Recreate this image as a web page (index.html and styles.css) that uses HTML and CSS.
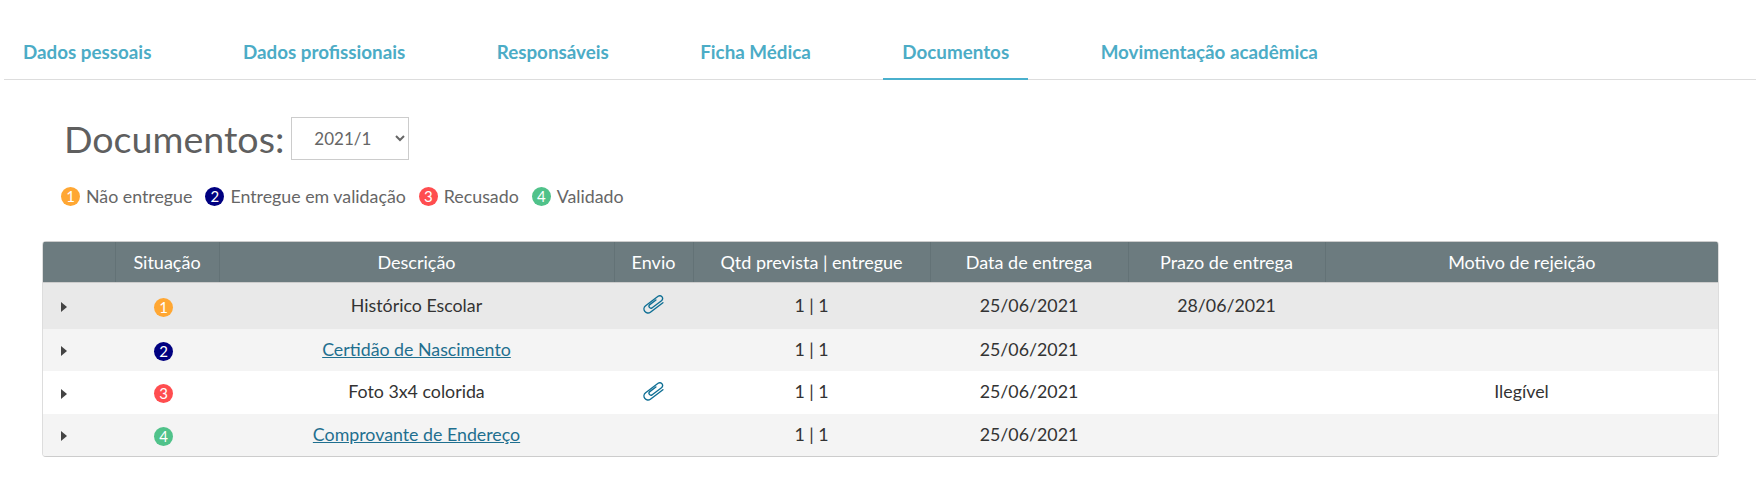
FILE: index.html
```html
<!DOCTYPE html>
<html lang="pt-BR">
<head>
	<meta charset="UTF-8">
	<title>Documentos</title>
	<link rel="stylesheet" href="styles.css">
</head>
<body>
	<ul class="tabs">
		<li><a href="#">Dados pessoais</a></li>
		<li><a href="#">Dados profissionais</a></li>
		<li><a href="#">Responsáveis</a></li>
		<li><a href="#">Ficha Médica</a></li>
		<li><a href="#" class="current">Documentos</a></li>
		<li><a href="#">Movimentação acadêmica</a></li>
	</ul>

	<div class="title">
		<h1>Documentos:</h1>
		<select class="period">
			<option>2021/1</option>
		</select>
	</div>

	<ul class="legend">
		<li><span class="num orange">1</span>Não entregue</li>
		<li><span class="num navy">2</span>Entregue em validação</li>
		<li><span class="num red">3</span>Recusado</li>
		<li><span class="num green">4</span>Validado</li>
	</ul>

	<svg width="0" height="0" class="defs">
		<symbol id="clip" viewBox="0 0 22 19">
			<path d="M19.9 7.7L7.4 17.2A4 4 0 0 1 2.6 10.8L15.1 1.3A2.8 2.8 0 0 1 18.5 5.8L8.9 13A2 2 0 0 1 6.5 9.9L12.9 5" fill="none" stroke="#0f6f94" stroke-width="1.4" stroke-linecap="round" stroke-linejoin="round"/>
		</symbol>
	</svg>

	<div class="docs">
		<table>
			<colgroup>
				<col class="c-arrow">
				<col class="c-status">
				<col class="c-desc">
				<col class="c-send">
				<col class="c-qty">
				<col class="c-date">
				<col class="c-due">
				<col>
			</colgroup>
			<thead>
				<tr>
					<th></th>
					<th>Situação</th>
					<th>Descrição</th>
					<th>Envio</th>
					<th>Qtd prevista | entregue</th>
					<th>Data de entrega</th>
					<th>Prazo de entrega</th>
					<th>Motivo de rejeição</th>
				</tr>
			</thead>
			<tbody>
				<tr class="r1">
					<td class="toggle"><span class="arrow"></span></td>
					<td><span class="num orange">1</span></td>
					<td>Histórico Escolar</td>
					<td><svg class="clip"><use href="#clip"></use></svg></td>
					<td>1 | 1</td>
					<td>25/06/2021</td>
					<td>28/06/2021</td>
					<td></td>
				</tr>
				<tr class="r2">
					<td class="toggle"><span class="arrow"></span></td>
					<td><span class="num navy">2</span></td>
					<td><a href="#">Certidão de Nascimento</a></td>
					<td></td>
					<td>1 | 1</td>
					<td>25/06/2021</td>
					<td></td>
					<td></td>
				</tr>
				<tr class="r3">
					<td class="toggle"><span class="arrow"></span></td>
					<td><span class="num red">3</span></td>
					<td>Foto 3x4 colorida</td>
					<td><svg class="clip"><use href="#clip"></use></svg></td>
					<td>1 | 1</td>
					<td>25/06/2021</td>
					<td></td>
					<td>Ilegível</td>
				</tr>
				<tr class="r4">
					<td class="toggle"><span class="arrow"></span></td>
					<td><span class="num green">4</span></td>
					<td><a href="#">Comprovante de Endereço</a></td>
					<td></td>
					<td>1 | 1</td>
					<td>25/06/2021</td>
					<td></td>
					<td></td>
				</tr>
			</tbody>
		</table>
	</div>
</body>
</html>
```

FILE: styles.css
```css
body, ul, li, h1 {
	margin: 0;
	padding: 0;
}
body {
	font: 17.8px/22px Lato, "Noto Sans", Arial, sans-serif;
	color: #333;
	background: #fff;
}
ul {
	list-style-type: none;
}
.defs {
	display: block;
	height: 0;
}
.tabs {
	display: flex;
	gap: 53.5px;
	margin-left: 4px;
	height: 80px;
	padding-top: 32px;
	box-sizing: border-box;
	border-bottom: 1px solid #ddd;
}
.tabs a {
	display: block;
	height: 48px;
	padding: 9px 19px 0;
	box-sizing: border-box;
	font-size: 18.8px;
	font-weight: 700;
	color: #4cacc6;
	text-decoration: none;
}
.tabs a.current {
	border-bottom: 2px solid #4ab0cd;
}
.title {
	display: flex;
	align-items: center;
	gap: 7px;
	margin: 37px 0 0 64px;
}
.title h1 {
	font-size: 37.6px;
	line-height: 43px;
	font-weight: 400;
	color: #5f5f5f;
}
.period {
	width: 118px;
	height: 43px;
	padding-left: 18px;
	font: 17px Lato, sans-serif;
	color: #666;
	background: #fff;
	border: 1px solid #ccc;
}
.legend {
	display: flex;
	gap: 13px;
	margin: 25px 0 0 61px;
	color: #666;
}
.legend li {
	display: flex;
	align-items: center;
}
.legend .num {
	margin-right: 6px;
}
.num {
	display: inline-block;
	width: 19px;
	height: 19px;
	border-radius: 50%;
	font-size: 15px;
	line-height: 19px;
	text-align: center;
	color: #fff;
}
.orange { background: #ffa733; }
.navy { background: #000080; }
.red { background: #ff4d4f; }
.green { background: #50c28a; }
.docs {
	margin: 34px 37px 0 42px;
	border-radius: 4px;
	border-bottom: 1px solid #ccc;
	border-right: 1px solid #ddd;
	border-left: 1px solid #ddd;
	overflow: hidden;
}
.docs table {
	width: 100%;
	border-collapse: collapse;
	table-layout: fixed;
}
.c-arrow { width: 72px; }
.c-status { width: 104px; }
.c-desc { width: 395px; }
.c-send { width: 79px; }
.c-qty { width: 237px; }
.c-date { width: 198px; }
.c-due { width: 197px; }
.docs th {
	height: 40px;
	padding: 0;
	font-size: 18px;
	font-weight: 400;
	color: #fff;
	background: #6c7b7f;
	border-left: 1px solid #637276;
	border-bottom: 1px solid #ccc;
	border-top: 1px solid #ccc;
}
.docs th:first-child {
	border-left: 0;
}
.docs td {
	padding: 0 0 2px;
	text-align: center;
	box-sizing: border-box;
}
.docs td.toggle {
	padding-left: 18px;
	text-align: left;
}
.r1 td { height: 46px; background: #e9e9e9; }
.r2 td { height: 42px; background: #f4f4f4; }
.r3 td { height: 43px; background: #fff; }
.r4 td { height: 42px; background: #f4f4f4; }
.docs a {
	color: #1f6f8f;
}
.docs .num {
	margin: 2px 7px 0 0;
	vertical-align: middle;
}
.arrow {
	display: inline-block;
	vertical-align: middle;
	border-left: 6px solid #444;
	border-top: 5px solid transparent;
	border-bottom: 5px solid transparent;
}
.clip {
	display: inline-block;
	width: 22px;
	height: 19px;
	margin-top: -5px;
	vertical-align: middle;
}
```
